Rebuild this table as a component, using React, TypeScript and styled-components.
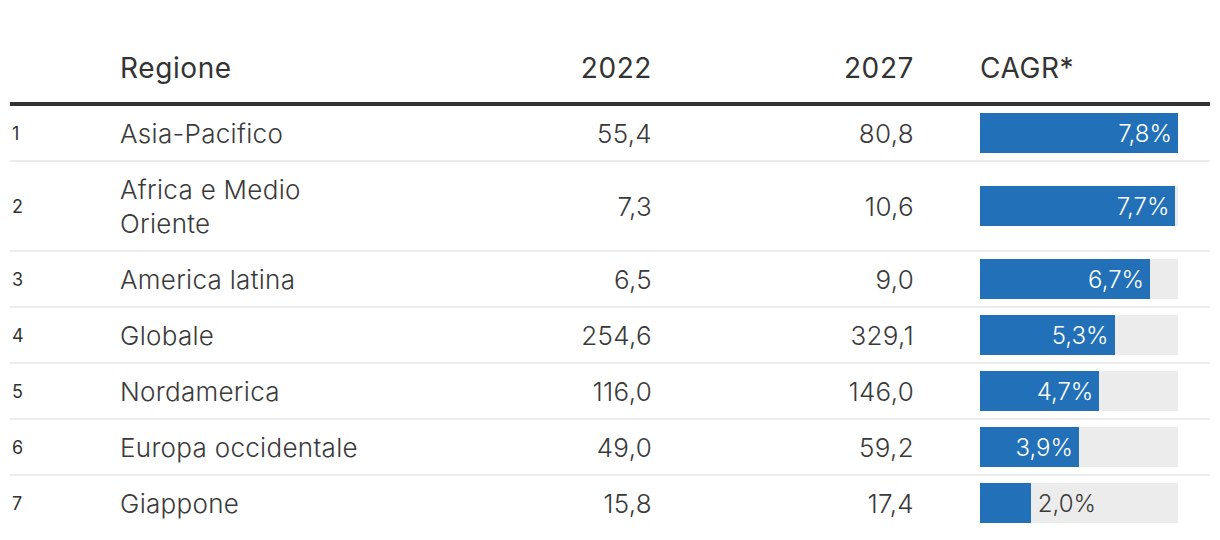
import React from 'react'
import styled, { createGlobalStyle } from 'styled-components'

const GlobalStyle = createGlobalStyle`
  body {
    margin: 0;
    background: #ffffff;
    font-family: Inter, "Noto Sans", sans-serif;
    color: #333333;
  }
`

const rows = [
  { rank: 1, region: 'Asia-Pacifico', y2022: '55,4', y2027: '80,8', cagr: 7.8 },
  { rank: 2, region: 'Africa e Medio Oriente', y2022: '7,3', y2027: '10,6', cagr: 7.7 },
  { rank: 3, region: 'America latina', y2022: '6,5', y2027: '9,0', cagr: 6.7 },
  { rank: 4, region: 'Globale', y2022: '254,6', y2027: '329,1', cagr: 5.3 },
  { rank: 5, region: 'Nordamerica', y2022: '116,0', y2027: '146,0', cagr: 4.7 },
  { rank: 6, region: 'Europa occidentale', y2022: '49,0', y2027: '59,2', cagr: 3.9 },
  { rank: 7, region: 'Giappone', y2022: '15,8', y2027: '17,4', cagr: 2.0 },
]

const MAX_CAGR = 7.8

const Table = styled.div`
  margin: 0 10px;
  width: 1200px;
`

const Row = styled.div<{ $head?: boolean }>`
  display: grid;
  grid-template-columns: 110px 250px 282px 262px 296px;
  align-items: ${({ $head }) => ($head ? 'end' : 'center')};
  border-bottom: ${({ $head }) => ($head ? '4px solid #333333' : '2px solid #ebebeb')};
  padding: ${({ $head }) => ($head ? '51px 0 17px' : '0')};

  &:last-child {
    border-bottom: none;
  }
`

const HeadCell = styled.div<{ $right?: boolean; $indent?: boolean }>`
  font-size: 28px;
  font-weight: 400;
  line-height: 34px;
  letter-spacing: 0.6px;
  text-align: ${({ $right }) => ($right ? 'right' : 'left')};
  padding-left: ${({ $indent }) => ($indent ? '66px' : '0')};
`

const Rank = styled.div`
  font-size: 18px;
  font-weight: 400;
  padding-left: 2px;
`

const Cell = styled.div<{ $right?: boolean }>`
  font-size: 26px;
  font-weight: 300;
  line-height: 34px;
  letter-spacing: 0.3px;
  color: #3a3a3a;
  padding: 11px 0 9px;
  text-align: ${({ $right }) => ($right ? 'right' : 'left')};
`

const BarCell = styled.div`
  padding: 7px 32px 7px 66px;
`

const Track = styled.div`
  display: flex;
  align-items: center;
  height: 40px;
  background: #ececec;
`

const Fill = styled.div`
  display: flex;
  align-items: center;
  justify-content: flex-end;
  height: 100%;
  background: #2170b8;
`

const BarLabel = styled.span<{ $inside: boolean }>`
  font-size: 24px;
  font-weight: 300;
  color: ${({ $inside }) => ($inside ? '#ffffff' : '#3a3a3a')};
  padding: ${({ $inside }) => ($inside ? '0 6px 0 0' : '0 0 0 7px')};
`

const fmt = (v: number) => v.toFixed(1).replace('.', ',') + '%'

const App = () => (
  <>
    <GlobalStyle />
    <Table>
      <Row $head>
        <div />
        <HeadCell>Regione</HeadCell>
        <HeadCell $right>2022</HeadCell>
        <HeadCell $right>2027</HeadCell>
        <HeadCell $indent>CAGR*</HeadCell>
      </Row>
      {rows.map((r) => {
        const inside = r.cagr >= 3
        return (
          <Row key={r.rank}>
            <Rank>{r.rank}</Rank>
            <Cell>{r.region}</Cell>
            <Cell $right>{r.y2022}</Cell>
            <Cell $right>{r.y2027}</Cell>
            <BarCell>
              <Track>
                <Fill style={{ width: `${(r.cagr / MAX_CAGR) * 100}%` }}>
                  {inside && <BarLabel $inside>{fmt(r.cagr)}</BarLabel>}
                </Fill>
                {!inside && <BarLabel $inside={false}>{fmt(r.cagr)}</BarLabel>}
              </Track>
            </BarCell>
          </Row>
        )
      })}
    </Table>
  </>
)

export default App
